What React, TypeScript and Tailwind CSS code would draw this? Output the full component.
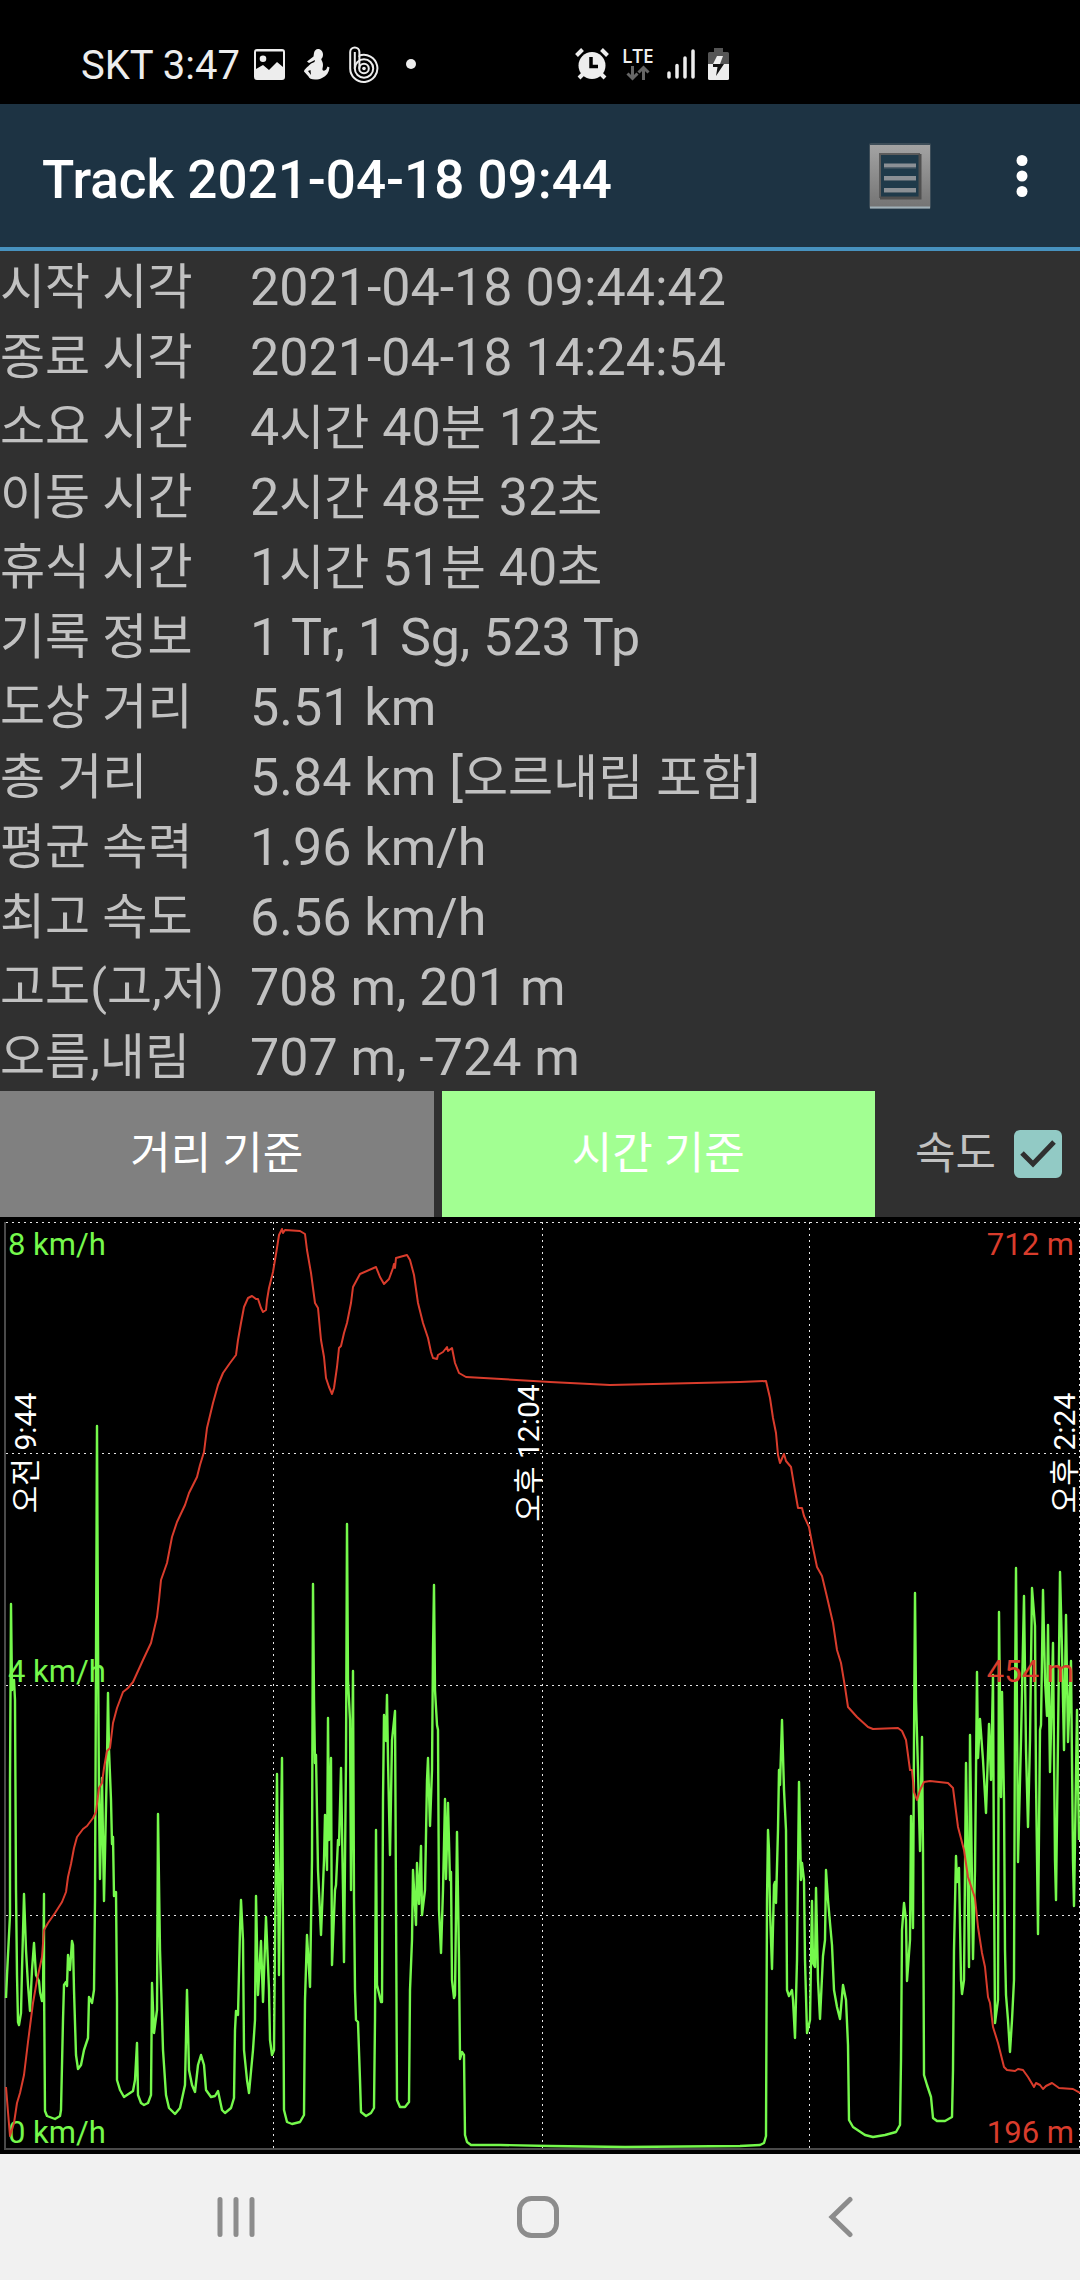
/**
 * TrackInfo - Summary and speed/altitude chart of a recorded track
 */

import { useState } from 'react';

interface StatRow {
  label: string;
  value: string;
}

type Basis = 'distance' | 'time';

const STATS: StatRow[] = [
  { label: '시작 시각', value: '2021-04-18 09:44:42' },
  { label: '종료 시각', value: '2021-04-18 14:24:54' },
  { label: '소요 시간', value: '4시간 40분 12초' },
  { label: '이동 시간', value: '2시간 48분 32초' },
  { label: '휴식 시간', value: '1시간 51분 40초' },
  { label: '기록 정보', value: '1 Tr, 1 Sg, 523 Tp' },
  { label: '도상 거리', value: '5.51 km' },
  { label: '총 거리', value: '5.84 km [오르내림 포함]' },
  { label: '평균 속력', value: '1.96 km/h' },
  { label: '최고 속도', value: '6.56 km/h' },
  { label: '고도(고,저)', value: '708 m, 201 m' },
  { label: '오름,내림', value: '707 m, -724 m' },
];

const BASIS_OPTIONS: { id: Basis; label: string }[] = [
  { id: 'distance', label: '거리 기준' },
  { id: 'time', label: '시간 기준' },
];

// Chart series, in plot coordinates
const ALTITUDE =
  '6,2087 8,2112 10,2136 14,2123 17,2103 20,2093 24,2075 28,2042 33,2003 37,1980 42,1957 44,1930 48,1923 55,1913 62,1902 66,1892 68,1877 71,1864 74,1848 77,1837 83,1829 87,1826 93,1818 96,1812 99,1788 102,1783 104,1768 107,1751 110,1748 113,1723 117,1708 123,1692 128,1688 133,1682 143,1660 151,1643 157,1617 159,1600 161,1580 167,1563 172,1537 177,1522 185,1505 189,1493 197,1477 200,1465 204,1452 207,1428 213,1403 218,1385 223,1373 230,1363 236,1355 238,1340 241,1323 244,1307 248,1298 252,1296 256,1299 258,1299 261,1308 263,1312 266,1310 267,1300 269,1288 273,1272 277,1248 279,1235 282,1229 283,1233 285,1230 300,1231 305,1234 307,1250 311,1273 315,1303 318,1308 321,1340 324,1357 326,1378 329,1387 332,1394 334,1388 337,1367 339,1348 341,1346 344,1333 347,1323 351,1303 353,1287 360,1274 376,1267 380,1277 384,1284 389,1279 393,1268 394,1264 395,1268 396,1258 407,1255 410,1260 414,1275 418,1303 423,1323 428,1338 431,1352 433,1358 437,1359 438,1355 443,1352 447,1347 448,1351 452,1348 455,1363 459,1373 466,1377 550,1382 610,1385 740,1382 766,1381 770,1398 773,1418 776,1433 778,1455 780,1463 784,1454 786,1461 791,1467 794,1485 798,1508 802,1508 804,1516 809,1527 812,1543 817,1567 822,1576 827,1597 833,1623 837,1650 841,1663 845,1687 848,1707 857,1717 868,1727 873,1729 898,1728 902,1731 906,1740 910,1770 912,1770 914,1792 917,1800 920,1790 924,1782 930,1781 948,1783 953,1788 958,1827 964,1850 968,1877 975,1898 978,1927 982,1953 985,1967 988,1997 990,2003 993,2027 998,2043 1004,2067 1007,2070 1015,2071 1018,2069 1023,2070 1028,2077 1034,2087 1036,2083 1040,2085 1043,2089 1046,2086 1052,2083 1059,2088 1073,2089 1080,2093';

const SPEED =
  '6,1998 7,1975 10,1915 10,1780 11,1604 12,1690 14,1680 15,1700 16,1890 17,1975 18,2022 19,2025 21,2013 22,1970 24,1894 26,1950 28,1985 30,2011 32,1970 34,1943 36,1975 39,1981 40,1992 42,2001 43,1995 44,1894 44,1980 45,2111 47,2116 55,2119 60,2116 61,2110 63,2020 64,1985 66,1982 67,1986 68,1955 70,1970 72,1941 73,1945 74,1990 76,2055 78,2069 81,2065 84,2050 88,2038 89,1997 92,2003 94,1990 95,1900 96,1660 97,1426 98,1640 99,1800 100,1879 102,1778 104,1901 107,1760 108,1693 109,1750 111,1800 112,1844 113,1837 114,1896 116,1892 117,2000 117,2080 120,2090 124,2097 127,2095 133,2091 135,2080 137,2043 138,2095 141,2103 144,2105 148,2103 151,2095 152,1983 154,2033 157,2010 158,1814 160,1950 163,2050 166,2095 169,2108 175,2114 180,2108 185,2085 187,1990 189,2070 192,2085 195,2092 198,2065 201,2055 204,2065 206,2090 211,2097 215,2096 218,2091 222,2110 225,2113 231,2108 234,2098 235,2030 236,2011 238,2015 240,1930 241,1900 243,1940 244,2050 247,2080 249,2093 253,2050 255,2020 256,1896 258,1995 261,1941 263,2002 266,1917 269,1990 270,2040 272,2055 274,2050 275,1940 277,1774 279,1975 282,1758 283,1930 284,2110 287,2122 292,2124 300,2122 304,2115 305,2000 307,1935 310,1987 312,1860 313,1584 314,1700 315,1763 316,1755 318,1870 321,1935 324,1860 325,1815 327,1870 328,1718 329,1840 331,1758 332,1965 335,1890 336,1885 338,1840 339,1845 341,1768 343,1890 344,1962 346,1760 347,1524 348,1680 350,1720 351,1890 353,1671 354,1900 355,1990 356,2020 358,2022 360,2080 361,2112 366,2116 371,2113 374,2108 375,2020 376,1830 377,1985 381,2002 382,2002 383,1800 384,1715 386,1741 387,1695 388,1760 390,1855 392,1740 395,1711 396,1900 397,2100 400,2107 405,2107 409,2102 410,1990 412,1940 413,1870 416,1925 417,1863 419,1904 421,1846 422,1915 425,1890 427,1780 428,1758 430,1826 432,1770 433,1650 434,1585 435,1690 437,1725 438,1730 439,1910 441,1953 443,1890 445,1799 446,1879 448,1803 450,1880 451,1872 452,1980 454,1998 455,1995 457,1832 459,1960 460,2059 462,2052 464,2055 465,2135 467,2142 471,2145 500,2145 550,2146 625,2147 740,2146 760,2145 764,2143 766,2136 767,1900 768,1830 769,1850 770,1910 772,1969 774,1885 775,1882 776,1903 778,1830 779,1770 780,1785 782,1720 784,1790 786,1830 787,1990 789,1996 792,1990 793,2000 795,2038 797,1960 799,1782 801,1880 802,1863 804,1880 805,1960 807,2033 810,2020 812,1901 813,1963 815,1967 816,1888 818,1980 820,2019 823,1956 825,1940 826,1870 828,1900 830,1923 832,1945 834,1990 837,2007 840,2019 843,1985 846,2000 848,2045 849,2120 853,2127 865,2135 873,2137 885,2135 896,2132 900,2125 901,2060 902,1930 904,1903 906,1920 907,1981 910,1940 911,1816 913,1928 914,1740 915,1593 916,1700 918,1770 920,1851 922,1737 923,1850 924,2075 927,2085 931,2097 933,2118 937,2121 945,2121 952,2117 953,2070 954,1950 956,1856 957,1882 959,1868 961,1980 962,1994 964,1980 966,1763 969,1967 970,1735 973,1959 975,1870 977,1672 978,1758 980,1719 983,1760 986,1813 989,1724 991,1780 993,1675 994,1880 995,2023 998,2000 999,1612 1001,1797 1002,1692 1004,1800 1005,1950 1006,1995 1008,2020 1010,2052 1012,2020 1014,1980 1015,1700 1016,1568 1018,1862 1021,1740 1024,1596 1026,1750 1028,1827 1030,1740 1032,1588 1035,1626 1036,1780 1038,1934 1040,1730 1041,1725 1043,1590 1045,1680 1047,1716 1048,1625 1050,1772 1053,1643 1055,1860 1056,1900 1058,1740 1060,1572 1062,1650 1064,1750 1066,1615 1068,1742 1071,1661 1073,1860 1074,1906 1077,1710 1079,1840';

const GRID_Y = [1222, 1453, 1685, 1915];
const GRID_X = [273, 542, 809, 1079];

const SPEED_LABELS = [
  { y: 1255, text: '8 km/h' },
  { y: 1682, text: '4 km/h' },
  { y: 2143, text: '0 km/h' },
];

const ALTITUDE_LABELS = [
  { y: 1255, text: '712 m' },
  { y: 1682, text: '454 m' },
  { y: 2143, text: '196 m' },
];

const TIME_LABELS = [
  { x: 36, text: '오전 9:44' },
  { x: 539, text: '오후 12:04' },
  { x: 1075, text: '오후 2:24' },
];

// Hangul is set a little smaller than the digits and latin letters beside it
function MixedText({ text }: { text: string }) {
  return (
    <>
      {text.split(/([가-힣]+)/).map((part, i) =>
        i % 2 === 1 ? (
          <span key={i} className="text-[49px] leading-none">
            {part}
          </span>
        ) : (
          part
        )
      )}
    </>
  );
}

function StatusBar() {
  return (
    <div className="flex h-[104px] items-center bg-black pt-6 pl-[81px] text-[#ededed]">
      <span className="pt-1 text-[40px] leading-10">SKT 3:47</span>
      <div className="ml-[14px] flex items-center gap-[19px]">
        <svg className="h-[31px] w-[31px]" viewBox="0 0 31 31" aria-hidden="true">
          <path
            fill="currentColor"
            fillRule="evenodd"
            d="M3 0h25a3 3 0 0 1 3 3v25a3 3 0 0 1-3 3H3a3 3 0 0 1-3-3V3a3 3 0 0 1 3-3zM2 2.500V20l7-4 6 5 8-8 6 5V2.500zM9 6.500a3.300 3.300 0 1 1 0 6.600 3.300 3.300 0 0 1 0-6.600z"
          />
        </svg>
        <svg className="h-[31px] w-[26px]" viewBox="0 0 26 31" fill="currentColor" aria-hidden="true">
          <path d="M14 0c3 0 5 2.500 5 5.500 0 2-.7 3.500-1.800 4.500.3 1.500 1.800 3 1.800 6 0 2-.8 3.500-.5 5 1 1.500 3.500.5 4.200-1.500l.8-2 2 1c-.5 5-3 8.500-7.500 10.500-2 1-4 1.500-7 1.500-3.500 0-6-1-6.500-3L0 22.500c0-2 4-5 6-7 1.500-1.500 3-2 4.500-2.500L11 11l-6 3-2-1.500 6.500-5L10 4c.3-2.300 2-4 4-4zM4 22l3 4-.5-5z" />
        </svg>
        <svg className="h-[37px] w-[30px]" viewBox="0 0 30 37" fill="none" stroke="currentColor" strokeWidth="2" aria-hidden="true">
          <path d="M1.200 22.500V6a4.600 4.600 0 0 1 9.200 0v3.500A13.600 13.600 0 1 1 1.200 22z" />
          <path d="M5.800 22.500V6" />
          <path d="M10.400 9.500v13" />
          <circle cx="15" cy="22.500" r="9.200" />
          <circle cx="15" cy="22.500" r="4.800" />
          <circle cx="15" cy="22.500" r="1.800" fill="currentColor" stroke="none" />
        </svg>
      </div>
      <span className="ml-[27px] h-[10px] w-[10px] rounded-full bg-[#ededed]" />

      <div className="ml-[159px] flex items-center gap-[13px]">
        <svg className="h-8 w-[34px]" viewBox="0 0 34 32" aria-hidden="true">
          <circle cx="17" cy="17.500" r="13.500" fill="currentColor" />
          <path d="M1.500 7.500l6-6M32.500 7.500l-6-6M4 30l4-4M30 30l-4-4" stroke="currentColor" strokeWidth="4" />
          <path d="M16 9v9.500h7" fill="none" stroke="#000" strokeWidth="3.500" />
        </svg>
        <div className="flex flex-col items-center">
          <span className="font-['Open_Sans',sans-serif] text-[19px] leading-[18px] font-semibold">LTE</span>
          <svg className="h-4 w-6" viewBox="0 0 24 16" fill="none" stroke="#666" strokeWidth="3" aria-hidden="true">
            <path d="M6.500 1v12M1.500 8.500l5 5 5-5M17.500 15V3M12.500 7.500l5-5 5 5" />
          </svg>
        </div>
        <svg className="h-8 w-7" viewBox="0 0 28 32" stroke="currentColor" strokeWidth="3.500" strokeLinecap="round" aria-hidden="true">
          <path d="M2 29v-4M10 29V17.500M18 29V10M26 29V3" />
        </svg>
        <svg className="h-8 w-[21px]" viewBox="0 0 21 32" aria-hidden="true">
          <path d="M6 0h9v4h4.500A1.500 1.500 0 0 1 21 5.500V16H0V5.500A1.500 1.500 0 0 1 1.500 4H6z" fill="#555" />
          <path d="M0 16h21v14.500a1.500 1.500 0 0 1-1.500 1.500h-18A1.500 1.500 0 0 1 0 30.500z" fill="currentColor" />
          <path d="M9 8h6l-3 8H5z" fill="currentColor" />
          <path d="M5 16h11L8 28l1.500-9H5z" fill="#111" />
        </svg>
      </div>
    </div>
  );
}

function AppBar() {
  return (
    <header className="flex h-[147px] items-center border-b-4 border-[#4792bf] bg-[#1d3343] pr-[34px] pl-[42px]">
      <h1 className="flex-1 pt-2 text-[53px] leading-[64px] font-medium text-white">Track 2021-04-18 09:44</h1>
      <button type="button" aria-label="목록">
        <svg className="h-[68px] w-[64px]" viewBox="0 0 64 68" fill="none" aria-hidden="true">
          <defs>
            <linearGradient id="frame" x1="0" y1="0" x2="0" y2="1">
              <stop offset="0" stopColor="#a3a3a3" />
              <stop offset="1" stopColor="#747474" />
            </linearGradient>
          </defs>
          <rect x="1" y="1" width="62" height="66" rx="2" fill="#3d4d58" />
          <path fill="url(#frame)" fillRule="evenodd" d="M2 3h60v62H2zM12 12v44h40V12z" />
          <path fill="#1f3a4a" d="M12 12h40v44H12z" />
          <path d="M2 65.500h60" stroke="#9fb0b8" strokeWidth="2" />
          <path d="M12 56V12h40" stroke="#5c5c5c" strokeWidth="2" />
          <path d="M52 12v44H12" stroke="#4f4f4f" strokeWidth="3" />
          <path d="M16 23.500h32M16 36h32M16 48h32" stroke="#8b9095" strokeWidth="4" />
          <path d="M16 26h32M16 38.500h32M16 50.500h32" stroke="#52616b" strokeWidth="1" />
        </svg>
      </button>
      <button type="button" aria-label="더보기" className="ml-[66px] flex w-[48px] justify-center">
        <svg className="h-[44px] w-3" viewBox="0 0 12 44" fill="#fff" aria-hidden="true">
          <circle cx="6" cy="6.500" r="5.500" />
          <circle cx="6" cy="22" r="5.500" />
          <circle cx="6" cy="37.500" r="5.500" />
        </svg>
      </button>
    </header>
  );
}

function TrackChart({ showSpeed }: { showSpeed: boolean }) {
  return (
    <svg className="block h-auto w-full bg-black" viewBox="0 1217 1080 937" role="img" aria-label="속도와 고도">
      {/* Grid */}
      <g stroke="#e6e6e6" strokeWidth="1" strokeDasharray="2 4" shapeRendering="crispEdges">
        {GRID_Y.map((y) => (
          <line key={y} x1="6" x2="1080" y1={y + 0.5} y2={y + 0.5} />
        ))}
        {GRID_X.map((x) => (
          <line key={x} x1={x + 0.5} x2={x + 0.5} y1="1222" y2="2148" />
        ))}
      </g>
      <path d="M5 1222V2149H1080" fill="none" stroke="#4a4a4a" strokeWidth="2" />

      {/* Time labels */}
      <g fill="#fff" fontSize="30" textAnchor="middle">
        {TIME_LABELS.map(({ x, text }) => (
          <text key={x} transform={`translate(${x} 1453) rotate(-90)`}>
            {text}
          </text>
        ))}
      </g>

      {/* Series */}
      {showSpeed && (
        <>
          <polyline points={SPEED} fill="none" stroke="#75f94c" strokeWidth="2.400" strokeLinejoin="round" />
          <g fill="#75f94c" fontSize="31">
            {SPEED_LABELS.map(({ y, text }) => (
              <text key={y} x="8" y={y}>
                {text}
              </text>
            ))}
          </g>
        </>
      )}
      <polyline points={ALTITUDE} fill="none" stroke="#d93c2c" strokeWidth="2" strokeLinejoin="round" />
      <g fill="#d93c2c" fontSize="31" textAnchor="end">
        {ALTITUDE_LABELS.map(({ y, text }) => (
          <text key={y} x="1074" y={y}>
            {text}
          </text>
        ))}
      </g>
    </svg>
  );
}

function NavBar() {
  return (
    <nav className="grid h-[126px] grid-cols-3 items-center bg-[#f1f1f1] pr-[89px] pl-[85px] text-[#8c8c8c]">
      <button type="button" aria-label="최근 앱" className="flex justify-center">
        <svg className="h-[42px] w-[42px]" viewBox="0 0 42 42" stroke="currentColor" strokeWidth="5" strokeLinecap="round" aria-hidden="true">
          <path d="M5 3.500v35M21 3.500v35M37 3.500v35" />
        </svg>
      </button>
      <button type="button" aria-label="홈" className="flex justify-center">
        <svg className="h-[42px] w-[42px]" viewBox="0 0 42 42" fill="none" stroke="currentColor" strokeWidth="5" aria-hidden="true">
          <rect x="2.500" y="2.500" width="37" height="37" rx="12" />
        </svg>
      </button>
      <button type="button" aria-label="뒤로" className="flex justify-center">
        <svg className="h-[42px] w-[42px]" viewBox="0 0 42 42" fill="none" stroke="currentColor" strokeWidth="5" strokeLinecap="round" aria-hidden="true">
          <path d="M31 3.500L13 21l18 17.500" />
        </svg>
      </button>
    </nav>
  );
}

export default function App() {
  const [basis, setBasis] = useState<Basis>('time');
  const [showSpeed, setShowSpeed] = useState(true);

  return (
    <div className="min-h-screen bg-[#303030] font-['Roboto','Noto_Sans_CJK_KR',sans-serif]">
      <StatusBar />
      <AppBar />

      {/* Track summary */}
      <table className="w-full table-fixed text-left text-[52px] leading-[64px] text-[#c1c1c1]">
        <tbody>
          {STATS.map(({ label, value }) => (
            <tr key={label} className="h-[70px]">
              <th scope="row" className="h-[70px] w-[250px] p-0 pt-1 text-[49px] font-normal whitespace-nowrap">
                {label}
              </th>
              <td className="h-[70px] p-0 pt-1 whitespace-nowrap">
                <MixedText text={value} />
              </td>
            </tr>
          ))}
        </tbody>
      </table>

      {/* Chart options */}
      <div className="flex h-[126px]">
        <div className="flex flex-1 gap-2">
          {BASIS_OPTIONS.map(({ id, label }) => (
            <button
              key={id}
              type="button"
              aria-pressed={basis === id}
              onClick={() => setBasis(id)}
              className={`flex-1 text-[44px] text-white ${basis === id ? 'bg-[#a2ff92]' : 'bg-[#808080]'}`}
            >
              {label}
            </button>
          ))}
        </div>
        <label className="flex w-[205px] items-center justify-end gap-[18px] pr-[18px] text-[44px] text-[#c1c1c1]">
          속도
          <span className="grid">
            <input
              type="checkbox"
              checked={showSpeed}
              onChange={(e) => setShowSpeed(e.target.checked)}
              className="col-start-1 row-start-1 h-12 w-12 appearance-none rounded-md border-4 border-[#92cac5] checked:bg-[#92cac5]"
            />
            {showSpeed && (
              <svg className="pointer-events-none col-start-1 row-start-1 h-12 w-12" viewBox="0 0 48 48" fill="none" aria-hidden="true">
                <path d="M8 23l11 11 21-22" stroke="#303030" strokeWidth="5" />
              </svg>
            )}
          </span>
        </label>
      </div>

      <TrackChart showSpeed={showSpeed} />
      <NavBar />
    </div>
  );
}
